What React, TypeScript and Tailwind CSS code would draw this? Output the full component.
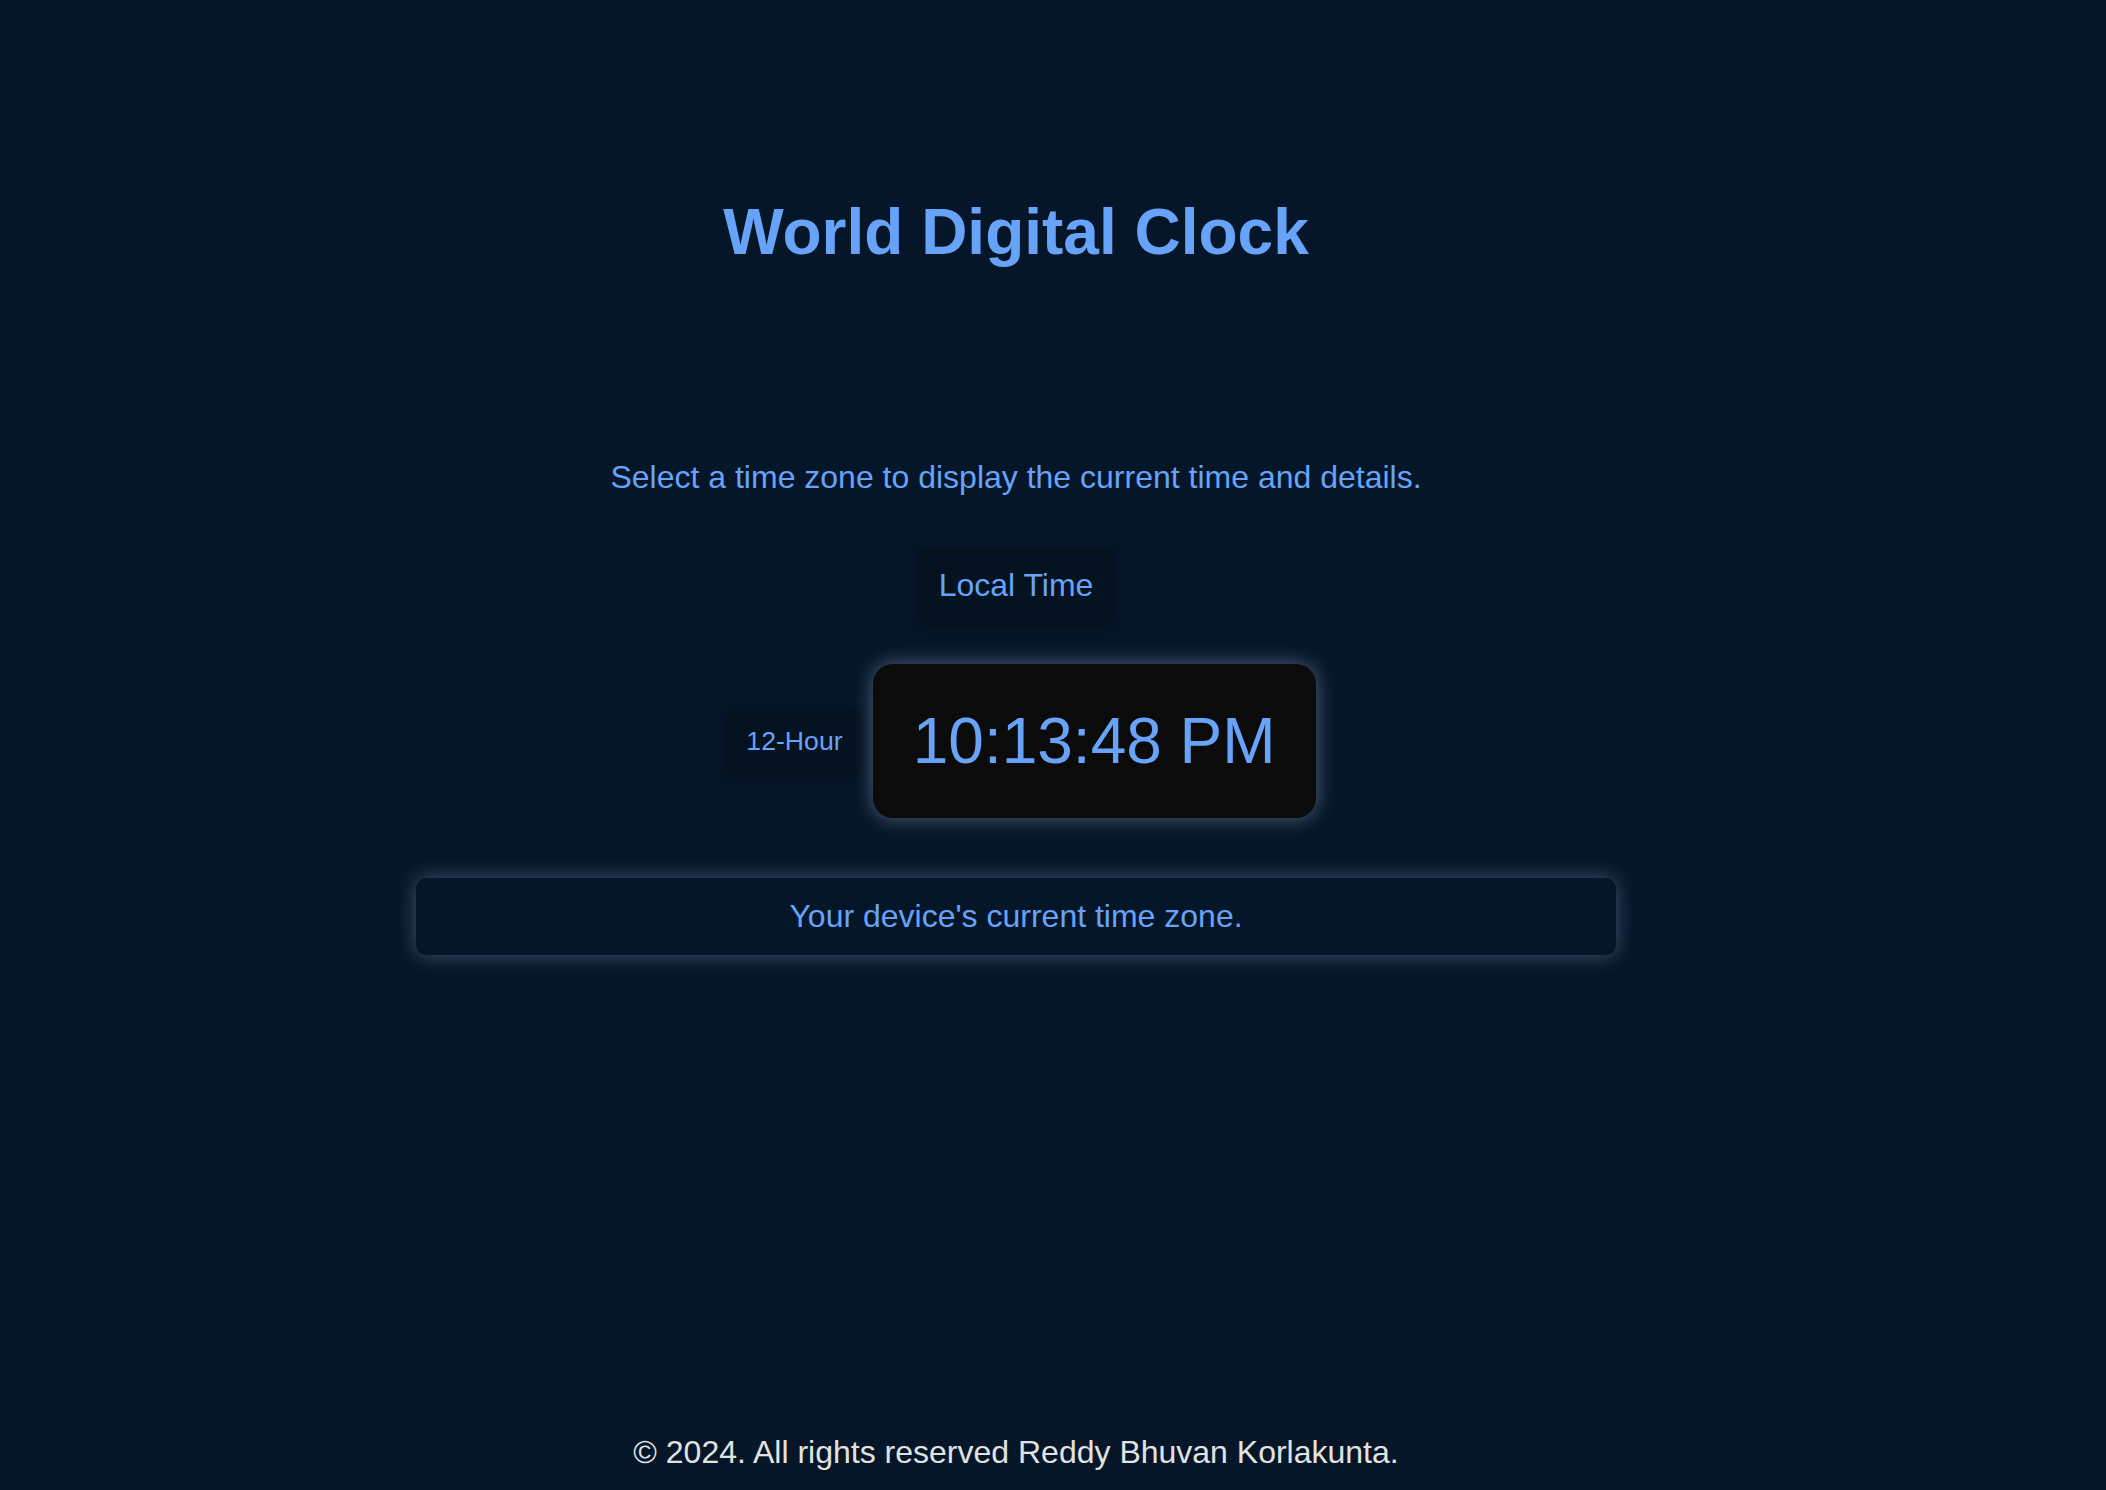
import React from 'react';

const font = { fontFamily: '"Liberation Sans", Arial, Helvetica, sans-serif' };

export default function App() {
  return (
    <div className="min-h-screen h-[1490px] w-full bg-[#061629] text-[#67a3f9] flex flex-col" style={font}>
      <div className="w-[2032px] flex flex-col items-center flex-1">
        <h1 className="mt-[195px] text-[64px] leading-[74px] font-bold">World Digital Clock</h1>

        <p className="mt-[190px] text-[32px] leading-[37px]">
          Select a time zone to display the current time and details.
        </p>

        <button className="mt-[51px] px-[21px] py-5 text-[32px] leading-[37px] rounded-[10px] bg-[#05121f] shadow-[0_4px_10px_rgba(0,0,0,0.25)] text-[#67a3f9]">
          Local Time
        </button>

        <div className="mt-10 ml-[10px] flex items-center gap-[10px]">
          <button className="px-5 py-4 text-[26.67px] leading-[31px] rounded-[10px] bg-[#05121f] shadow-[0_4px_10px_rgba(0,0,0,0.25)] text-[#67a3f9]">
            12-Hour
          </button>
          <div className="w-[443px] h-[154px] px-10 flex items-center justify-center rounded-[20px] bg-[#0b0b0b] shadow-[0_0_20px_rgba(190,215,255,0.4)]">
            <span className="text-[64px] leading-[74px] whitespace-nowrap">10:13:48 PM</span>
          </div>
        </div>

        <div className="mt-[60px] w-[1200px] py-5 text-center text-[32px] leading-[37px] rounded-[10px] bg-[#061629] shadow-[0_0_20px_rgba(180,205,240,0.35)]">
          Your device's current time zone.
        </div>

        <footer className="mt-auto pb-[19px] text-[32px] leading-[37px] text-[#e2e2e2]">
          © 2024. All rights reserved Reddy Bhuvan Korlakunta.
        </footer>
      </div>
    </div>
  );
}
